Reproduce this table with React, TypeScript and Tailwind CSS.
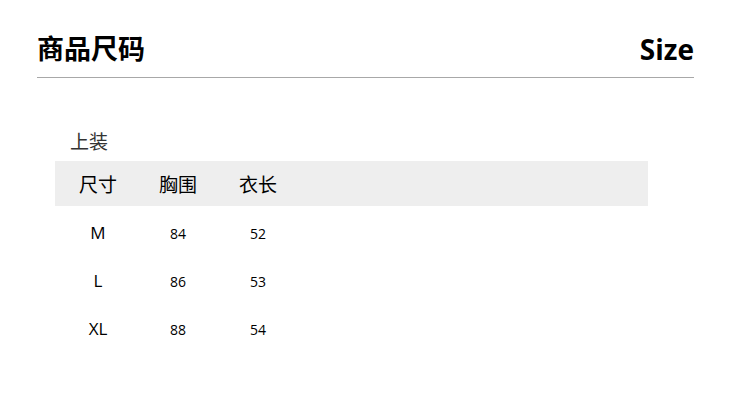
const rows = [
  { size: "M", chest: "84", length: "52" },
  { size: "L", chest: "86", length: "53" },
  { size: "XL", chest: "88", length: "54" },
];

const font = { fontFamily: '"Open Sans", "Noto Sans CJK SC", sans-serif' };

export default function App() {
  return (
    <div className="w-[740px] h-[397px] bg-white text-black" style={font}>
      {/* Header */}
      <div className="ml-[37px] mr-[46px] pt-[30px] flex items-end justify-between border-b border-[#a8a8a8] pb-[9px]">
        <h1 className="text-[27px] leading-[38px] font-bold">商品尺码</h1>
        <span className="text-[28px] leading-[38px] font-bold">Size</span>
      </div>

      {/* Table */}
      <div className="ml-[55px] mt-[49px] w-[593px]">
        <div className="pl-[15px] text-[19px] leading-[30px] text-[#333]">上装</div>
        <div className="mt-[4px] h-[45px] bg-[#eeeeee] flex items-center pl-[3px] pt-[3px] text-[19px]">
          <div className="w-[80px] text-center">尺寸</div>
          <div className="w-[80px] text-center">胸围</div>
          <div className="w-[80px] text-center">衣长</div>
        </div>
        <div className="pt-[3px]">
          {rows.map((r) => (
            <div key={r.size} className="h-[48px] flex items-center pl-[3px]">
              <div className="w-[80px] text-center text-[17px]">{r.size}</div>
              <div className="w-[80px] text-center text-[14px]">{r.chest}</div>
              <div className="w-[80px] text-center text-[14px]">{r.length}</div>
            </div>
          ))}
        </div>
      </div>
    </div>
  );
}
